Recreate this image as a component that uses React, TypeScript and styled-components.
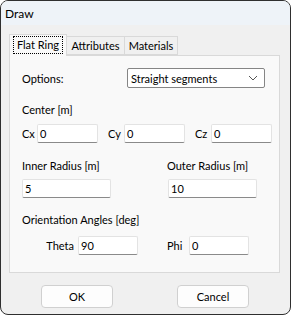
import React from "react";
import styled, { createGlobalStyle } from "styled-components";

const GlobalStyle = createGlobalStyle`
  body {
    margin: 0;
    background: #ffffff;
    font-family: Lato, "Noto Sans", sans-serif;
    font-size: 11px;
  }
`;

const Window = styled.div`
  width: 291px;
  height: 315px;
  box-sizing: border-box;
  border: 1px solid #2f2f2f;
  border-radius: 8px;
  overflow: hidden;
  background: #f0f0f0;
  display: flex;
  flex-direction: column;
`;

const TitleBar = styled.div`
  height: 24px;
  background: #eef3f8;
  padding-left: 4px;
  display: flex;
  align-items: center;
  color: #000;
  font-size: 12px;
`;

const Body = styled.div`
  padding: 8px 10px 0 8px;
  display: flex;
  flex-direction: column;
`;

const TabStrip = styled.div`
  display: flex;
  align-items: flex-end;
  height: 22px;
  position: relative;
  z-index: 1;
`;

const Tab = styled.div<{ $active?: boolean; $width: number }>`
  box-sizing: border-box;
  width: ${(p) => p.$width}px;
  height: ${(p) => (p.$active ? "22px" : "19px")};
  margin-bottom: ${(p) => (p.$active ? "-1px" : "0")};
  border: 1px solid #d9d9d9;
  border-bottom: ${(p) => (p.$active ? "none" : "1px solid #d9d9d9")};
  margin-left: ${(p) => (p.$active ? "0" : "-1px")};
  background: ${(p) => (p.$active ? "#f9f9f9" : "#f0f0f0")};
  display: flex;
  align-items: center;
  justify-content: center;
  padding-bottom: ${(p) => (p.$active ? "2px" : "0")};
  color: #000;
`;

const FocusText = styled.span`
  outline: 1px dotted #000;
  outline-offset: 1px;
  padding: 0 2px;
  line-height: 14px;
`;

const Panel = styled.div`
  box-sizing: border-box;
  width: 271px;
  height: 218px;
  border: 1px solid #d9d9d9;
  background: #f9f9f9;
  padding: 12px 0 0 12px;
  display: flex;
  flex-direction: column;
  color: #000;
`;

const OptionsRow = styled.div`
  display: flex;
  align-items: center;
  height: 20px;
`;

const Label = styled.span<{ $width?: number; $right?: boolean }>`
  display: inline-block;
  width: ${(p) => (p.$width ? `${p.$width}px` : "auto")};
  text-align: ${(p) => (p.$right ? "right" : "left")};
  white-space: nowrap;
  flex-shrink: 0;
`;

const Select = styled.div`
  box-sizing: border-box;
  width: 138px;
  height: 20px;
  border: 1px solid #858585;
  border-radius: 2px;
  background: #ffffff;
  display: flex;
  align-items: center;
  justify-content: space-between;
  padding: 0 6px 0 3px;
`;

const SectionLabel = styled.div<{ $top: number }>`
  margin-top: ${(p) => p.$top}px;
  height: 14px;
  line-height: 14px;
`;

const FieldRow = styled.div<{ $top: number }>`
  margin-top: ${(p) => p.$top}px;
  display: flex;
  gap: 10px;
`;

const TwoCols = styled.div<{ $top: number }>`
  margin-top: ${(p) => p.$top}px;
  display: grid;
  grid-template-columns: 145px 1fr;
`;

const Group = styled.div`
  display: flex;
  align-items: center;
`;

const Input = styled.div<{ $width: number; $gap?: number }>`
  box-sizing: border-box;
  width: ${(p) => p.$width}px;
  height: 19px;
  margin-left: ${(p) => p.$gap ?? 0}px;
  background: #ffffff;
  border: 1px solid #e3e3e3;
  border-bottom: 1px solid #8a8a8a;
  border-radius: 2px;
  padding-left: 2px;
  display: flex;
  align-items: center;
`;

const ButtonRow = styled.div`
  display: flex;
  padding: 12px 0 0 32px;
  gap: 64px;
`;

const Button = styled.div`
  box-sizing: border-box;
  width: 72px;
  height: 23px;
  border: 1px solid #d0d0d0;
  border-radius: 4px;
  background: #fdfdfd;
  display: flex;
  align-items: center;
  justify-content: center;
  color: #000;
`;

const Chevron = () => (
  <svg width="10" height="6" viewBox="0 0 10 6">
    <path d="M1 1 L5 5 L9 1" fill="none" stroke="#555" strokeWidth="1" />
  </svg>
);

export default function App() {
  return (
    <>
      <GlobalStyle />
      <Window>
        <TitleBar>Draw</TitleBar>
        <Body>
          <TabStrip>
            <Tab $active $width={58}>
              <FocusText>Flat Ring</FocusText>
            </Tab>
            <Tab $width={59}>Attributes</Tab>
            <Tab $width={54}>Materials</Tab>
          </TabStrip>
          <Panel>
            <OptionsRow>
              <Label $width={105}>Options:</Label>
              <Select>
                <span>Straight segments</span>
                <Chevron />
              </Select>
            </OptionsRow>
            <SectionLabel $top={15}>Center [m]</SectionLabel>
            <FieldRow $top={7}>
              <Group>
                <Label $width={15}>Cx</Label>
                <Input $width={61}>0</Input>
              </Group>
              <Group>
                <Label $width={16}>Cy</Label>
                <Input $width={61}>0</Input>
              </Group>
              <Group>
                <Label $width={16}>Cz</Label>
                <Input $width={61}>0</Input>
              </Group>
            </FieldRow>
            <SectionLabel $top={16}>
              <TwoCols $top={0}>
                <span>Inner Radius [m]</span>
                <span>Outer Radius [m]</span>
              </TwoCols>
            </SectionLabel>
            <TwoCols $top={6}>
              <Input $width={89}>5</Input>
              <Input $width={89} $gap={1}>10</Input>
            </TwoCols>
            <SectionLabel $top={15}>Orientation Angles [deg]</SectionLabel>
            <TwoCols $top={9}>
              <Group>
                <Label $width={52} $right>Theta</Label>
                <Input $width={60} $gap={4}>90</Input>
              </Group>
              <Group>
                <Label $width={18}>Phi</Label>
                <Input $width={60} $gap={4}>0</Input>
              </Group>
            </TwoCols>
          </Panel>
          <ButtonRow>
            <Button>OK</Button>
            <Button>Cancel</Button>
          </ButtonRow>
        </Body>
      </Window>
    </>
  );
}
